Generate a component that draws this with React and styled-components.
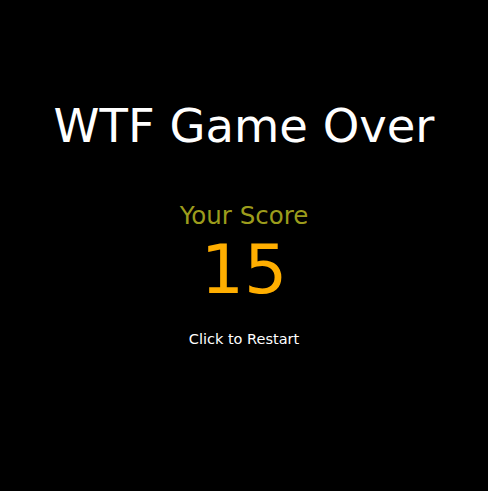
import React from "react";
import styled, { createGlobalStyle } from "styled-components";

const GlobalStyle = createGlobalStyle`
  html, body {
    margin: 0;
    padding: 0;
    background: #000;
  }
  body {
    font-family: "DejaVu Sans", "Open Sans", sans-serif;
  }
`;

const Screen = styled.div`
  width: 488px;
  height: 491px;
  background: #000;
  display: flex;
  flex-direction: column;
  align-items: center;
  box-sizing: border-box;
  padding-top: 96px;
`;

const Title = styled.h1`
  margin: 0;
  font-size: 46.5px;
  font-weight: normal;
  color: #fff;
  line-height: 60px;
`;

const ScoreLabel = styled.div`
  margin-top: 46px;
  font-size: 24.5px;
  color: #9c9c1c;
  line-height: 28px;
`;

const ScoreValue = styled.div`
  margin-top: 2px;
  font-size: 68px;
  color: #ffae00;
  line-height: 76px;
`;

const Restart = styled.div`
  margin-top: 23px;
  font-size: 14.5px;
  color: #fff;
  cursor: pointer;
`;

export default function App() {
  return (
    <>
      <GlobalStyle />
      <Screen>
        <Title>WTF Game Over</Title>
        <ScoreLabel>Your Score</ScoreLabel>
        <ScoreValue>15</ScoreValue>
        <Restart>Click to Restart</Restart>
      </Screen>
    </>
  );
}
